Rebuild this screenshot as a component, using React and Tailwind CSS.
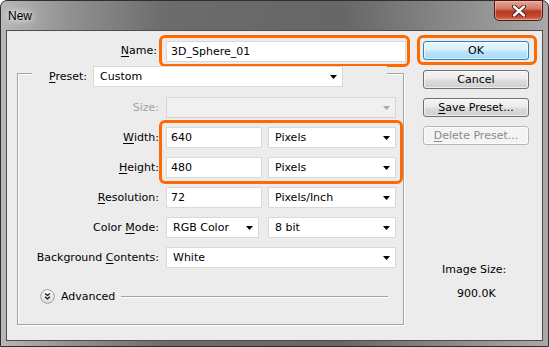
import React from 'react';

const Arrow = ({ disabled }) => (
  <svg width="7" height="4" viewBox="0 0 7 4" className="shrink-0">
    <polygon points="0,0 7,0 3.5,4" fill={disabled ? '#a8a8a8' : '#000'} />
  </svg>
);

const Input = ({ value, className = '' }) => (
  <div className={`h-[21px] bg-white border border-[#d9d9d9] pl-[4px] flex items-center ${className}`}>
    {value}
  </div>
);

const Select = ({ value, className = '', disabled }) => (
  <div
    className={`h-[21px] border flex items-center justify-between pl-[6px] pr-[5px] ${
      disabled ? 'bg-[#f0f0f0] border-[#d6d6d6]' : 'bg-white border-[#d9d9d9]'
    } ${className}`}
  >
    <span>{value}</span>
    <Arrow disabled={disabled} />
  </div>
);

const Label = ({ children, className = '' }) => (
  <div className={`w-[141px] shrink-0 text-right ${className}`}>{children}</div>
);

const Btn = ({ children, variant }) => {
  const styles = {
    ok: 'border-[#3c7fb1] bg-[linear-gradient(180deg,#eaf6fd_0%,#d9f0fc_48%,#bee6fd_52%,#a7d9f5_100%)] text-black',
    disabled: 'border-[#b5b9bc] bg-[#f4f4f4] text-[#8a8a8a]',
    normal: 'border-[#707070] bg-[linear-gradient(180deg,#f4f4f4_0%,#ebebeb_48%,#dddddd_52%,#cfcfcf_100%)] text-black',
  };
  return (
    <div
      className={`h-[19px] w-[106px] rounded-[3px] border text-center leading-[17px] shadow-[inset_0_0_0_1px_rgba(255,255,255,0.6)] ${styles[variant || 'normal']}`}
    >
      {children}
    </div>
  );
};

const U = ({ children }) => <span className="underline underline-offset-[2px]">{children}</span>;

const App = () => {
  return (
    <div className="w-[549px] h-[347px] overflow-hidden font-['DejaVu_Sans',sans-serif] text-[11px] leading-[14px] text-black">
      <div className="w-[549px] h-[347px] flex flex-col border border-[#2f2f2f] rounded-t-[7px] bg-[linear-gradient(90deg,#b8b8b8_0%,#929292_12%,#6c6c6c_30%,#666666_62%,#8c8c8c_84%,#a9a9a9_100%)]">
        {/* title bar */}
        <div className="h-[29px] flex shrink-0">
          <div className="pl-[7px] pt-[8px] font-['Liberation_Sans',sans-serif] text-[12px] [text-shadow:0_0_6px_#fff,0_0_10px_#fff]">
            New
          </div>
          <div className="ml-auto mr-[5px] -mt-px h-[21px] w-[49px] rounded-b-[5px] border border-[#4a1a12] bg-[linear-gradient(180deg,#e7a898_0%,#d37a66_40%,#b8371f_55%,#c2482f_80%,#d9765e_100%)] flex items-center justify-center shadow-[inset_0_0_0_1px_rgba(255,200,190,0.5)]">
            <svg width="14" height="12" viewBox="0 0 14 12">
              <path d="M2 1.5 L12 10.5 M12 1.5 L2 10.5" stroke="#3a1410" strokeWidth="4.2" strokeLinecap="round" />
              <path d="M2 1.5 L12 10.5 M12 1.5 L2 10.5" stroke="#fff" strokeWidth="2.4" strokeLinecap="round" />
            </svg>
          </div>
        </div>

        {/* client area */}
        <div className="ml-[5px] w-[537px] h-[311px] border border-[#4d4d4d] bg-[#ececec] flex">
          {/* left column */}
          <div className="w-[403px] shrink-0">
            {/* name */}
            <div className="mt-[4px] flex items-center">
              <div className="w-[150px] text-right">
                <U>N</U>ame:
              </div>
              <div className="ml-[2px] w-[251px] border-[3px] border-[#ff6a00] rounded-[6px] pt-[3px] pb-[2px] pl-[4px] pr-[1px]">
                <Input value="3D_Sphere_01" />
              </div>
            </div>

            {/* group box */}
            <div className="mt-[6px] ml-[10px] w-[387px] h-[252px] border border-[#a3a3a3] shadow-[inset_1px_1px_0_#fff,1px_1px_0_#fff] flex flex-col">
              <div className="-mt-[8px] h-[21px] flex">
                <div className="w-[14px]" />
                <div className="w-[355px] h-[21px] bg-[#ececec] flex items-center">
                  <div className="ml-[17px] w-[44px]">
                    <U>P</U>reset:
                  </div>
                  <Select value="Custom" className="w-[250px]" />
                </div>
              </div>

              <div className="mt-[10px] flex items-center">
                <Label className="text-[#a3a3a3]">Size:</Label>
                <Select value="" disabled className="ml-[7px] w-[230px]" />
              </div>

              <div className="mt-[2px] flex">
                <div className="w-[141px] shrink-0 pt-[7px] flex flex-col gap-[9px]">
                  <div className="h-[21px] flex items-center justify-end">
                    <U>W</U>idth:
                  </div>
                  <div className="h-[21px] flex items-center justify-end">
                    <U>H</U>eight:
                  </div>
                </div>
                <div className="w-[244px] border-[3px] border-[#ff6a00] rounded-[6px] pt-[4px] pb-[3px] px-[4px] flex flex-col gap-[9px]">
                  <div className="flex gap-[6px]">
                    <Input value="640" className="w-[96px]" />
                    <Select value="Pixels" className="w-[128px]" />
                  </div>
                  <div className="flex gap-[6px]">
                    <Input value="480" className="w-[96px]" />
                    <Select value="Pixels" className="w-[128px]" />
                  </div>
                </div>
              </div>

              <div className="mt-[3px] flex items-center">
                <Label>
                  <U>R</U>esolution:
                </Label>
                <Input value="72" className="ml-[7px] w-[96px]" />
                <Select value="Pixels/Inch" className="ml-[6px] w-[128px]" />
              </div>

              <div className="mt-[9px] flex items-center">
                <Label>
                  Color <U>M</U>ode:
                </Label>
                <Select value="RGB Color" className="ml-[7px] w-[93px]" />
                <Select value="8 bit" className="ml-[9px] w-[128px]" />
              </div>

              <div className="mt-[9px] flex items-center">
                <Label>
                  Background <U>C</U>ontents:
                </Label>
                <Select value="White" className="ml-[7px] w-[230px]" />
              </div>

              <div className="mt-[21px] h-[15px] flex items-center">
                <svg width="15" height="15" viewBox="0 0 15 15" className="ml-[22px] shrink-0">
                  <defs>
                    <linearGradient id="adv" x1="0" y1="0" x2="0" y2="1">
                      <stop offset="0" stopColor="#ffffff" />
                      <stop offset="1" stopColor="#dcdcdc" />
                    </linearGradient>
                  </defs>
                  <circle cx="7.5" cy="7.5" r="6.8" fill="url(#adv)" stroke="#9a9a9a" strokeWidth="1" />
                  <path d="M5 4.5 L7.5 6.5 L10 4.5 M5 7.8 L7.5 9.8 L10 7.8" fill="none" stroke="#1a1a1a" strokeWidth="1.3" />
                </svg>
                <span className="ml-[6px]">Advanced</span>
                <div className="ml-[6px] mr-[15px] flex-1 h-[2px] border-t border-[#a3a3a3] border-b border-b-white" />
              </div>
            </div>
          </div>

          {/* right column */}
          <div className="flex-1 flex flex-col">
            <div className="mt-[4px] ml-[7px] w-[120px] border-[3px] border-[#ff6a00] rounded-[6px] pt-[3px] pb-[2px] pl-[3px]">
              <Btn variant="ok">OK</Btn>
            </div>
            <div className="mt-[5px] ml-[13px]">
              <Btn>Cancel</Btn>
            </div>
            <div className="mt-[9px] ml-[13px]">
              <Btn>
                <U>S</U>ave Preset...
              </Btn>
            </div>
            <div className="mt-[9px] ml-[13px]">
              <Btn variant="disabled">
                <U>D</U>elete Preset...
              </Btn>
            </div>
            <div className="mt-[118px] pl-[32px]">Image Size:</div>
            <div className="mt-[10px] pl-[47px]">900.0K</div>
          </div>
        </div>
      </div>
    </div>
  );
};

export default App;
